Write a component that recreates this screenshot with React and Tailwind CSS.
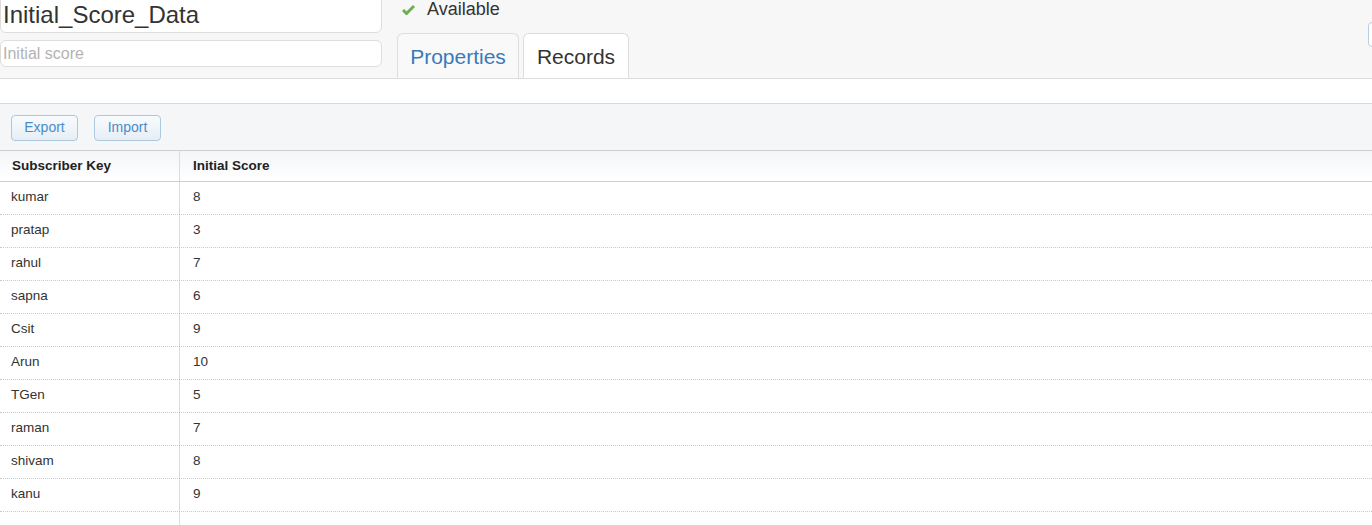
const rows = [
  ['kumar', '8'],
  ['pratap', '3'],
  ['rahul', '7'],
  ['sapna', '6'],
  ['Csit', '9'],
  ['Arun', '10'],
  ['TGen', '5'],
  ['raman', '7'],
  ['shivam', '8'],
  ['kanu', '9'],
];

function Check() {
  return (
    <svg width="13" height="11" viewBox="0 0 13 11">
      <path d="M1 6 L4.5 9.5 L12 2" fill="none" stroke="#6ab04c" strokeWidth="3" />
    </svg>
  );
}

export default function App() {
  return (
    <div className="w-[1372px] h-[525px] overflow-hidden bg-white font-['Liberation_Sans',Arial,sans-serif] text-[#333]">
      {/* header area */}
      <div className="h-[79px] bg-[#f7f7f7] border-b border-[#dedede] flex relative">
        <div className="w-[382px] flex flex-col">
          <div className="mt-[-6px] h-[39px] bg-white border border-[#ddd] rounded-[6px] pl-[2px] flex items-end pb-[5px] text-[24px] leading-none text-[#333]">
            Initial_Score_Data
          </div>
          <div className="mt-[7px] h-[27px] bg-white border border-[#ddd] rounded-[6px] pl-[2px] flex items-center text-[16px] text-[#b3b3b3]">
            Initial score
          </div>
        </div>
        <div className="ml-[15px] flex flex-col">
          <div className="h-[22px] flex items-center pl-[5px] gap-[12px] text-[18px] leading-none pb-[3px]">
            <Check />
            <span>Available</span>
          </div>
          <div className="mt-[12px] flex gap-[4px]">
            <div className="w-[122px] h-[45px] border border-[#ddd] border-b-0 rounded-t-[6px] bg-[#f9f9f9] flex items-center justify-center text-[21px] text-[#3a7ab8] pt-[1px]">
              Properties
            </div>
            <div className="w-[106px] h-[45px] border border-[#ddd] border-b-0 rounded-t-[6px] bg-white flex items-center justify-center text-[21px] text-[#333] pt-[1px] relative z-10">
              Records
            </div>
          </div>
        </div>
        <div className="absolute left-[1368px] top-[22px] w-[10px] h-[25px] border border-[#b9cde0] rounded-[4px] bg-white"></div>
      </div>

      <div className="h-[25px] border-b border-[#d9d9d9] bg-white"></div>

      {/* toolbar */}
      <div className="h-[46px] bg-[#f5f6f7] flex items-center gap-[16px] pl-[11px] pt-[1px]">
        <button className="w-[67px] h-[26px] border border-[#aec8de] rounded-[4px] bg-gradient-to-b from-[#f8fbfd] to-[#e6eef5] text-[14px] text-[#4d8cc9]">
          Export
        </button>
        <button className="w-[67px] h-[26px] border border-[#aec8de] rounded-[4px] bg-gradient-to-b from-[#f8fbfd] to-[#e6eef5] text-[14px] text-[#4d8cc9]">
          Import
        </button>
      </div>

      {/* table */}
      <div className="text-[13.5px]">
        <div className="flex h-[32px] border-t border-b border-[#cfcfcf] bg-gradient-to-b from-[#f3f5f7] to-white font-bold text-[#222]">
          <div className="w-[180px] border-r border-[#dcdcdc] flex items-center pl-[12px]">Subscriber Key</div>
          <div className="flex-1 flex items-center pl-[13px]">Initial Score</div>
        </div>
        {rows.map(([name, score]) => (
          <div key={name} className="flex h-[33px] border-b border-dotted border-[#c8c8c8]">
            <div className="w-[180px] border-r border-[#dcdcdc] flex items-center pl-[11px] pb-[2px]">{name}</div>
            <div className="flex-1 flex items-center pl-[13px] pb-[2px]">{score}</div>
          </div>
        ))}
        <div className="flex h-[20px]">
          <div className="w-[180px] border-r border-[#dcdcdc]"></div>
        </div>
      </div>
    </div>
  );
}
